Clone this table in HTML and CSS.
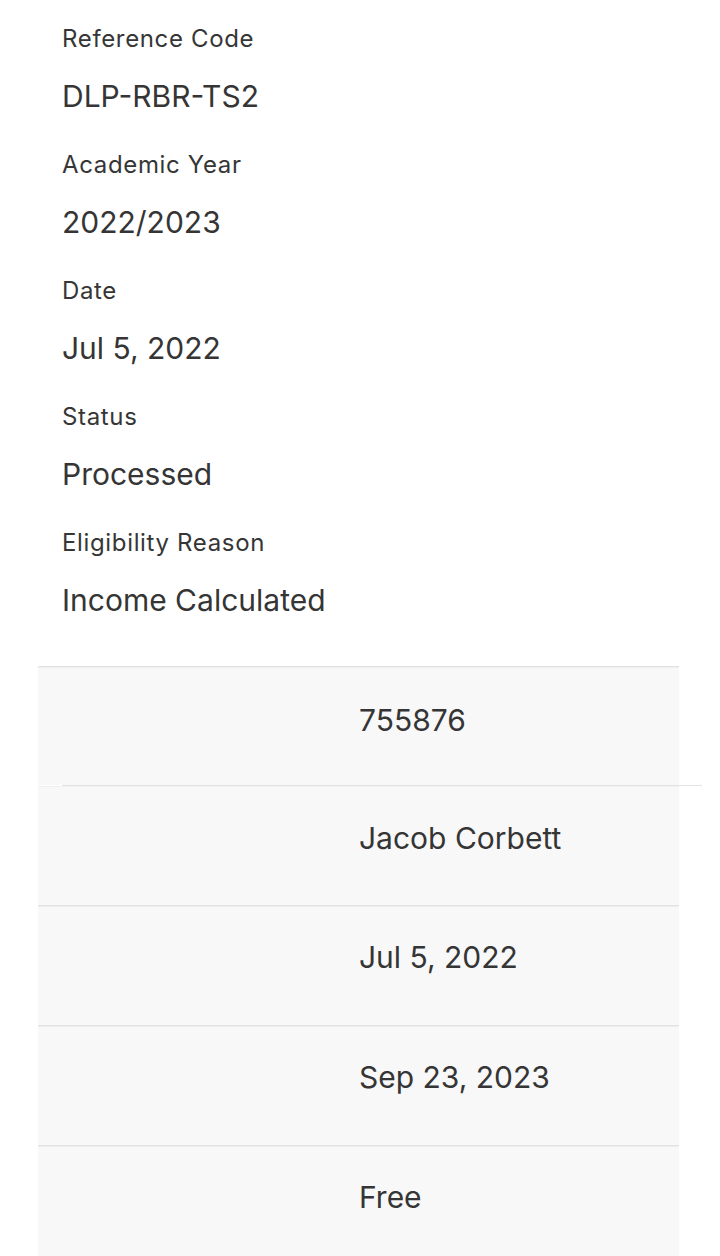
FILE: index.html
```html
<!DOCTYPE html>
<html lang="en">
<head>
<meta charset="utf-8">
<link rel="stylesheet" href="styles.css">
</head>
<body>
<section class="details">
  <div class="field"><div class="label">Reference Code</div><div class="value">DLP-RBR-TS2</div></div>
  <div class="field"><div class="label">Academic Year</div><div class="value">2022/2023</div></div>
  <div class="field"><div class="label">Date</div><div class="value">Jul 5, 2022</div></div>
  <div class="field"><div class="label">Status</div><div class="value">Processed</div></div>
  <div class="field"><div class="label">Eligibility Reason</div><div class="value">Income Calculated</div></div>
</section>
<section class="table">
  <div class="row row-first"><div class="cell-key"></div><div class="cell-val">755876</div></div>
  <div class="divider-shifted"></div>
  <div class="row row-second"><div class="cell-key"></div><div class="cell-val">Jacob Corbett</div></div>
  <div class="row"><div class="cell-key"></div><div class="cell-val">Jul 5, 2022</div></div>
  <div class="row"><div class="cell-key"></div><div class="cell-val">Sep 23, 2023</div></div>
  <div class="row"><div class="cell-key"></div><div class="cell-val">Free</div></div>
</section>
</body>
</html>
```
FILE: styles.css
```css
html, body {
  margin: 0;
  padding: 0;
  background: #ffffff;
}
body {
  font-family: Inter, "Noto Sans", "Liberation Sans", sans-serif;
  color: #333333;
  width: 720px;
  height: 1256px;
  overflow: hidden;
}
.details {
  padding: 24px 0 0 62px;
  display: flex;
  flex-direction: column;
  gap: 36px;
}
.field {
  display: flex;
  flex-direction: column;
  gap: 24px;
}
.label {
  font-size: 24px;
  line-height: 30px;
  letter-spacing: 0.65px;
  color: #363636;
}
.value {
  font-size: 30px;
  line-height: 36px;
  letter-spacing: 0;
  color: #353535;
}
.table {
  margin: 48px 0 0 38px;
  width: 641px;
  display: flex;
  flex-direction: column;
}
.row {
  height: 120px;
  box-sizing: border-box;
  background: #f8f8f8;
  border-top: 1px solid #e2e2e2;
  box-shadow: inset 0 1px 0 #eeeeee;
  padding-top: 33px;
  display: grid;
  grid-template-columns: 321px 1fr;
  align-items: start;
}
.row-first {
  height: 119px;
  padding-top: 35px;
}
.divider-shifted {
  height: 1px;
  background: #e2e2e2;
  margin: 0 -23px 0 24px;
  position: relative;
  z-index: 1;
}
.row-second {
  height: 119px;
  padding-top: 33px;
  border-top-color: #f0f0f0;
  box-shadow: none;
}
.cell-val {
  font-size: 30px;
  line-height: 36px;
  letter-spacing: 0;
  color: #353535;
}
```
